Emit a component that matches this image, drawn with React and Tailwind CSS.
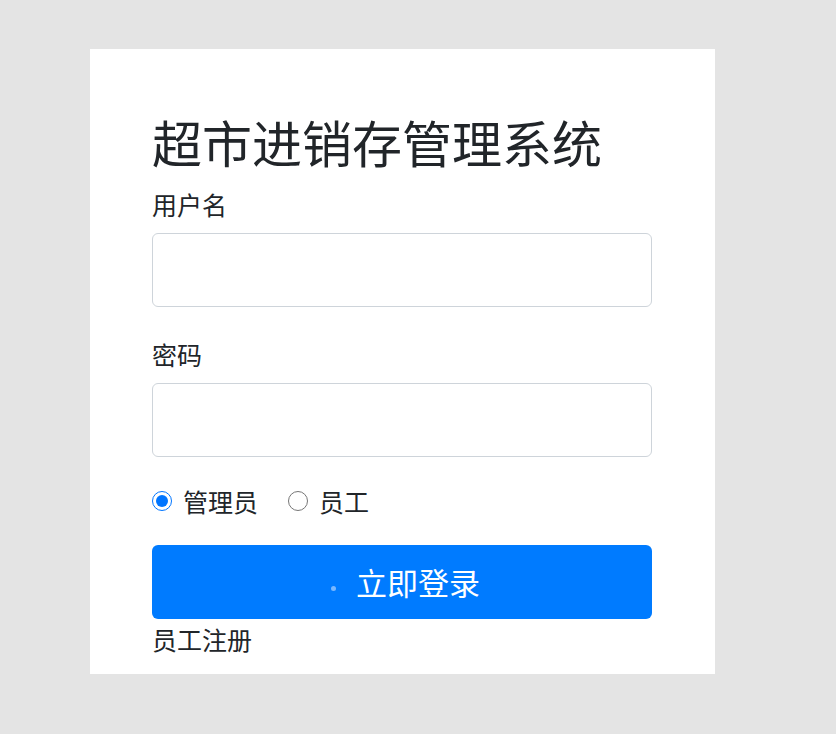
import React from "react";

export default function App() {
  const font = { fontFamily: '"Noto Sans CJK SC", "Noto Sans", sans-serif' };
  return (
    <div className="min-h-[734px] w-full bg-[#e4e4e4] pt-[49px] pl-[90px]" style={font}>
      <div className="w-[625px] h-[625px] bg-white pt-[62px] px-[62px] text-[#212529] flex flex-col">
        <h1 className="text-[50px] leading-[60px] font-normal m-0">超市进销存管理系统</h1>
        <label className="mt-[15px] text-[25px] leading-[37px]">用户名</label>
        <input
          type="text"
          className="mt-[10px] w-[500px] h-[74px] border border-[#ced4da] rounded-[6px] px-3 outline-none"
        />
        <label className="mt-[29px] text-[25px] leading-[37px]">密码</label>
        <input
          type="password"
          className="mt-[10px] w-[500px] h-[74px] border border-[#ced4da] rounded-[6px] px-3 outline-none"
        />
        <div className="mt-[26px] flex items-center h-[37px] text-[25px]">
          <input type="radio" name="role" defaultChecked className="m-0 w-[20px] h-[20px] -translate-y-[1px]" />
          <span className="ml-[11px]">管理员</span>
          <input type="radio" name="role" className="ml-[30px] m-0 w-[20px] h-[20px] -translate-y-[1px]" />
          <span className="ml-[11px]">员工</span>
        </div>
        <button className="mt-[25px] w-[500px] h-[74px] bg-[#007bff] rounded-[6px] text-white text-[31px] flex items-center justify-center pl-[7px]">
          <span className="w-[5px] h-[5px] rounded-full bg-[#7ab8ff] mr-[20px] translate-y-[6px]"></span>
          <span>立即登录</span>
        </button>
        <div className="mt-[2px] text-[25px] leading-[37px]">员工注册</div>
      </div>
    </div>
  );
}
